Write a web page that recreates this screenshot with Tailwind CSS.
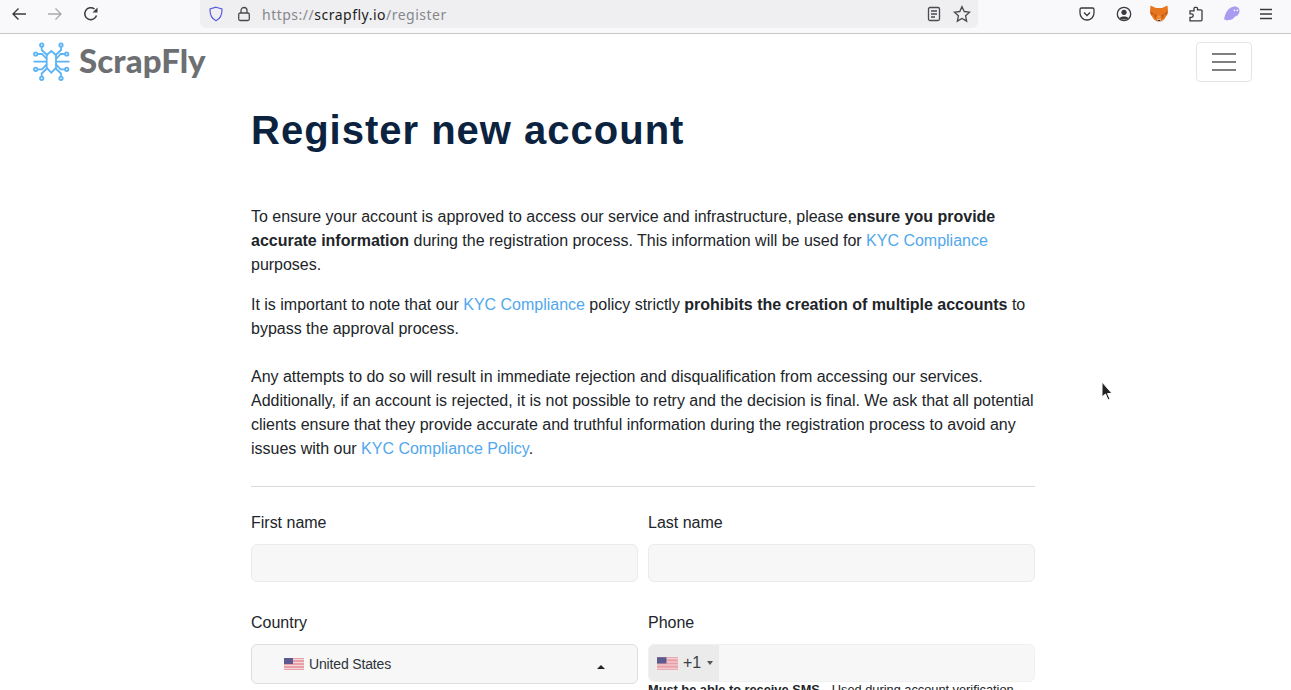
<!DOCTYPE html>
<html lang="en">
<head>
    <meta charset="UTF-8">
    <title>Register new account</title>
    <script src="https://cdn.jsdelivr.net/npm/@tailwindcss/browser@4"></script>
</head>
<body class="h-[690px] overflow-hidden bg-white font-['Liberation_Sans',sans-serif] text-[#212529]">
<!--browser toolbar-->
<div class="h-[34px] pb-[6px] flex items-center bg-[#f9f9fb] border-b border-[#c8c8c8] relative">
    <div class="w-[200px] flex items-center">
        <svg class="ml-[11px] w-4 h-4" viewBox="0 0 16 16" fill="none" stroke="#3a3a3f" stroke-width="1.4"><path d="M15 8H2M7.500 2.500 2 8l5.500 5.500"/></svg>
        <svg class="ml-[20px] w-4 h-4" viewBox="0 0 16 16" fill="none" stroke="#a9a9ac" stroke-width="1.3"><path d="M1 8h13M8.500 2.500 14 8l-5.500 5.500"/></svg>
        <svg class="ml-[20px] w-4 h-4" viewBox="0 0 16 16" fill="none" stroke="#3a3a3f" stroke-width="1.5"><path d="M13.500 9.500A6 6 0 1 1 11.500 3"/><path d="M14.500 1.500v5h-5z" fill="#3a3a3f" stroke="none"/></svg>
    </div>
    <div class="w-[778px] h-[28px] self-start bg-[#efeff1] rounded-b-md flex items-center">
        <svg class="ml-2 w-4 h-4" viewBox="0 0 16 16" fill="none" stroke="#5a5ae0" stroke-width="1.2"><path d="M8 1.200 14 3c.2 5.500-1.500 9.500-6 11.800C3.500 12.500 1.800 8.500 2 3z"/></svg>
        <svg class="ml-[12px] w-4 h-4" viewBox="0 0 16 16" fill="none" stroke="#4a4a4f" stroke-width="1.300"><rect x="2.700" y="7" width="10.600" height="7.500" rx="1.500"/><path d="M5 7V4.500a3 3 0 0 1 6 0V7"/></svg>
        <div class="ml-[10px] flex-1 text-[14px] tracking-[0.5px] text-[#87878b] font-['Noto_Sans',sans-serif]">https://<span class="text-[#1d1d20]">scrapfly.io</span>/register</div>
        <svg class="w-4 h-4" viewBox="0 0 16 16" fill="none" stroke="#4a4a4f" stroke-width="1.300"><rect x="2.500" y="1.500" width="11" height="13" rx="1.500"/><path d="M5 5h6M5 8h6M5 11h4"/></svg>
        <svg class="ml-[11px] mr-[7px] w-[18px] h-[18px]" viewBox="0 0 16 16" fill="none" stroke="#4a4a4f" stroke-width="1.200"><path d="m8 1.500 2 4.300 4.700.6-3.500 3.200.9 4.700L8 12l-4.100 2.300.9-4.700L1.300 6.400 6 5.800z"/></svg>
    </div>
    <div class="flex-1 flex items-center">
        <svg class="ml-[101px] w-4 h-4" viewBox="0 0 16 16" fill="none" stroke="#3a3a3f" stroke-width="1.300"><path d="M2.500 2h11A1.500 1.500 0 0 1 15 3.500V7a7 7 0 0 1-14 0V3.500A1.500 1.500 0 0 1 2.500 2z"/><path d="m5 6.500 3 3 3-3"/></svg>
        <svg class="ml-[21px] w-4 h-4" viewBox="0 0 16 16"><circle cx="8" cy="8" r="6.700" fill="none" stroke="#3a3a3f" stroke-width="1.300"/><circle cx="8" cy="6.300" r="2.600" fill="#3a3a3f"/><path d="M3.500 12.300c1-2.400 8-2.400 9 0C11 14 5 14 3.500 12.300z" fill="#3a3a3f"/></svg>
        <svg class="ml-[18px] w-[18px] h-[17px]" viewBox="0 0 18 17"><path d="M.5.500 6 3h6l5.500-2.500L18 6l-1 4-3 4.500-3 2H7l-3-2L1 10 0 6z" fill="#e8761f"/><path d="M0 6 4 9 1 10zM18 6l-4 3 3 1zM4 9l3 1-2 4zM14 9l-3 1 2 4z" fill="#c25a12"/><path d="M7 10.500h4l-.5 3h-3z" fill="#f0923a"/><path d="M7 14h4v2.500H7z" fill="#d9c3b0"/><path d="M7.700 15h2.600v1H7.700z" fill="#3a3028"/></svg>
        <svg class="ml-[20px] w-4 h-4" viewBox="0 0 16 16" fill="none" stroke="#3a3a3f" stroke-width="1.300"><path d="M7 1.500h1.500a1 1 0 0 1 1 1V4H13a1 1 0 0 1 1 1v9a1 1 0 0 1-1 1H2v-3.500h1.500a1.500 1.500 0 0 0 0-3.500H2V5h4V2.500a1 1 0 0 1 1-1z" transform="translate(0 -.2)"/></svg>
        <svg class="ml-[19px] w-[18px] h-[17px]" viewBox="0 0 16 16"><path d="M.500 14C1.500 7 5 2 10 1.500c3.500-.3 5.500 2 5 5-.5 2.500-2.500 4-4.500 4.500-1.500 2.500-4 3.500-6 3l-2 .5-1-1z" fill="#a99bf0"/><circle cx="10.300" cy="5" r=".8" fill="#fff"/><circle cx="13" cy="5" r=".8" fill="#fff"/></svg>
        <svg class="ml-[18px] w-[14px] h-[14px]" viewBox="0 0 14 14" stroke="#3a3a3f" stroke-width="1.300"><path d="M1 2.500h12M1 7h12M1 11.500h12"/></svg>
    </div>
</div>

<!--navbar-->
<div class="h-[56px] flex items-center justify-between pl-[33px] pr-[39px]">
    <div class="flex items-center">
        <svg class="w-[37px] h-[40px]" viewBox="33 42 37 40" fill="none" stroke="#5db4f5" stroke-width="1.800">
            <path d="M51.300 51 56 55v13l-4.700 4.700-4.600-4.700V55z"/>
            <path d="M41.700 46.700V50l5.800 5.500M61 46.700V50l-5.800 5.500M37.400 54H42l4.700 5M65 54h-4.300L56 59M33.500 61.700h13.200M69.500 61.700H56M37.400 69.300H42l4.700-4.800M65 69.300h-4.300L56 64.500M41.700 76.600v-3.100l5.800-5.500M61 76.600v-3.100L55.200 68"/>
            <circle cx="41.700" cy="45" r="1.700"/><circle cx="61" cy="45" r="1.700"/><circle cx="35.700" cy="54" r="1.700"/><circle cx="66.700" cy="54" r="1.700"/><circle cx="35.700" cy="69.300" r="1.700"/><circle cx="66.700" cy="69.300" r="1.700"/><circle cx="41.700" cy="78.300" r="1.700"/><circle cx="61" cy="78.300" r="1.700"/>
        </svg>
        <span class="ml-[9px] -mt-[3px] text-[33px] leading-none font-black tracking-[0.1px] text-[#6d6f73] font-['Lato',sans-serif]">ScrapFly</span>
    </div>
    <button class="w-[56px] h-[40px] border border-[#e4e4e4] rounded flex flex-col items-center justify-center gap-[6px]">
        <span class="block w-6 h-[2px] bg-[#808080]"></span>
        <span class="block w-6 h-[2px] bg-[#808080]"></span>
        <span class="block w-6 h-[2px] bg-[#808080]"></span>
    </button>
</div>

<!--form-->
<div class="w-[784px] ml-[251px] tracking-[-0.01px]">
    <h1 class="mt-[15px] text-[40px] leading-[50px] font-bold tracking-[1px] text-[#0c2340]">Register new account</h1>
    <p class="mt-[50px] text-base leading-6">To ensure your account is approved to access our service and infrastructure, please <b>ensure you provide accurate information</b> during the registration process. This information will be used for <a class="text-[#52a8ec]">KYC Compliance</a> purposes.</p>
    <p class="mt-4 text-base leading-6">It is important to note that our <a class="text-[#52a8ec]">KYC Compliance</a> policy strictly <b>prohibits the creation of multiple accounts</b> to bypass the approval process.<br><br>Any attempts to do so will result in immediate rejection and disqualification from accessing our services. Additionally, if an account is rejected, it is not possible to retry and the decision is final. We ask that all potential clients ensure that they provide accurate and truthful information during the registration process to avoid any issues with our <a class="text-[#52a8ec]">KYC Compliance Policy</a>.</p>
    <hr class="mt-[25px] border-[#d9d9d9]">
    <div class="mt-6 grid grid-cols-2 gap-x-[10px]">
        <div>
            <label class="block text-base leading-6">First name</label>
            <input class="mt-[9px] block w-full h-[38px] bg-[#f7f7f7] border border-[#ebebeb] rounded-md">
        </div>
        <div>
            <label class="block text-base leading-6">Last name</label>
            <input class="mt-[9px] block w-full h-[38px] bg-[#f7f7f7] border border-[#ebebeb] rounded-md">
        </div>
        <div class="mt-[29px]">
            <label class="block text-base leading-6">Country</label>
            <div class="mt-[9px] h-[40px] bg-[#f7f7f7] border border-[#dedede] rounded-md flex items-center pl-[32px] pr-[32px]">
                <svg class="w-[20px] h-[12px]" viewBox="0 0 20 12"><rect width="20" height="12" fill="#e8a0a8"/><path d="M0 1.500h20M0 4.500h20M0 7.500h20M0 10.500h20" stroke="#f3d8da"/><rect width="9" height="6" fill="#5c5a8e"/></svg>
                <span class="ml-[5px] flex-1 text-[14px] tracking-[-0.15px] text-[#2e3338]">United States</span>
                <span class="w-0 h-0 border-x-4 border-x-transparent border-b-4 border-b-[#212529] mt-[5px]"></span>
            </div>
        </div>
        <div class="mt-[29px]">
            <label class="block text-base leading-6">Phone</label>
            <div class="mt-[9px] h-[38px] bg-[#f7f7f7] border border-[#f0f0f0] rounded-md flex items-center overflow-hidden">
                <div class="w-[70px] h-full bg-[#ebebeb] flex items-center pl-2">
                    <svg class="w-[21px] h-[13px]" viewBox="0 0 20 12"><rect width="20" height="12" fill="#e8a0a8"/><path d="M0 1.500h20M0 4.500h20M0 7.500h20M0 10.500h20" stroke="#f3d8da"/><rect width="9" height="6" fill="#5c5a8e"/></svg>
                    <span class="ml-[5px] text-base text-[#3a3f44]">+1</span>
                    <span class="ml-[6px] w-0 h-0 border-x-[3px] border-x-transparent border-t-4 border-t-[#555]"></span>
                </div>
            </div>
            <p class="text-[12.8px] leading-4 text-[#212529]"><b>Must be able to receive SMS</b><span class="ml-3">Used during account verification</span></p>
        </div>
    </div>
</div>

<!--mouse cursor-->
<svg class="absolute left-[1099px] top-[380px] w-[16px] h-[22px]" viewBox="0 0 16 22"><path d="M3 2v15l3.500-3 2.500 6 2-1-2.500-5.500H13z" fill="#222" stroke="#fff" stroke-width="1"/></svg>
</body>
</html>
